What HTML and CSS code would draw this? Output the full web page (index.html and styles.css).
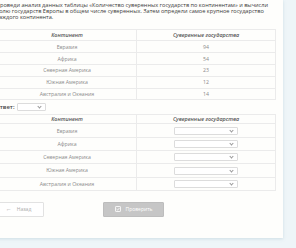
FILE: index.html
```html
<!DOCTYPE html>
<html lang="ru">
<head>
<meta charset="utf-8">
<link rel="stylesheet" href="styles.css">
</head>
<body>
<div class="page">
  <div class="card">
    <p class="task">Проведи анализ данных таблицы «Количество суверенных государств по континентам» и вычисли долю государств Европы в общем числе суверенных. Затем определи самое крупное государство каждого континента.</p>
    <table class="data">
      <thead>
        <tr><th>Континент</th><th>Суверенные государства</th></tr>
      </thead>
      <tbody>
        <tr><td>Евразия</td><td>94</td></tr>
        <tr><td>Африка</td><td>54</td></tr>
        <tr><td>Северная Америка</td><td>23</td></tr>
        <tr><td>Южная Америка</td><td>12</td></tr>
        <tr><td>Австралия и Океания</td><td>14</td></tr>
      </tbody>
    </table>
    <div class="answer">
      <span class="answer-label">Ответ:</span>
      <span class="select small"><span class="chev"></span></span>
    </div>
    <table class="data answers">
      <thead>
        <tr><th>Континент</th><th>Суверенные государства</th></tr>
      </thead>
      <tbody>
        <tr><td>Евразия</td><td><span class="select"><span class="chev"></span></span></td></tr>
        <tr><td>Африка</td><td><span class="select"><span class="chev"></span></span></td></tr>
        <tr><td>Северная Америка</td><td><span class="select"><span class="chev"></span></span></td></tr>
        <tr><td>Южная Америка</td><td><span class="select"><span class="chev"></span></span></td></tr>
        <tr><td>Австралия и Океания</td><td><span class="select"><span class="chev"></span></span></td></tr>
      </tbody>
    </table>
    <div class="actions">
      <button class="btn back"><span class="arrow">&#8592;</span>Назад</button>
      <button class="btn check"><svg class="ico" viewBox="0 0 10 10" width="6" height="6"><rect x="0.8" y="0.8" width="8.4" height="8.4" rx="1" fill="none" stroke="#fff" stroke-width="1.4"/><path d="M2.6 5.2 L4.3 6.8 L7.5 3.3" fill="none" stroke="#fff" stroke-width="1.4"/></svg>Проверить</button>
    </div>
  </div>
</div>
</body>
</html>
```
FILE: styles.css
```css
html, body {
  margin: 0;
  padding: 0;
}
body {
  background: #eef5f8;
  width: 296px;
  height: 248px;
  overflow: hidden;
  font-family: "Open Sans", "Liberation Sans", sans-serif;
}
.page {
  display: flex;
}
.card {
  margin-left: -10px;
  width: 279px;
  height: 235px;
  padding: 3px 7px 0 7px;
  background: #fefefc;
  box-shadow: 0 1px 3px rgba(150, 180, 195, 0.35);
}
.task {
  margin: 0 0 9px -1px;
  font-size: 5.6px;
  line-height: 5.8px;
  color: #3a3a3a;
}
.data {
  width: 279px;
  border-collapse: collapse;
  table-layout: fixed;
  font-size: 5.2px;
}
.data th, .data td {
  border: 1px solid #ebebeb;
  text-align: center;
  padding: 0;
  vertical-align: middle;
}
.data th {
  height: 10px;
  font-weight: 600;
  font-style: italic;
  color: #555;
  font-size: 5.4px;
}
.data td {
  height: 10.8px;
  color: #8a8a8a;
}
.answer {
  display: flex;
  align-items: center;
  gap: 2px;
  height: 14px;
}
.answer-label {
  font-size: 6px;
  font-weight: 600;
  color: #444;
  margin-left: -2px;
}
.select {
  display: inline-block;
  position: relative;
  width: 62px;
  height: 6px;
  border: 1px solid #dcdcdc;
  border-radius: 1px;
  background: #fff;
  vertical-align: middle;
}
.select.small {
  width: 27px;
}
.chev {
  position: absolute;
  right: 4px;
  top: 1px;
  width: 2px;
  height: 2px;
  border-right: 1px solid #999;
  border-bottom: 1px solid #999;
  transform: rotate(45deg);
}
.answers th {
  height: 8px;
}
.answers td {
  height: 12.3px;
}
.actions {
  display: flex;
  align-items: center;
  gap: 59px;
  margin-top: 11px;
  margin-left: -4px;
}
.btn {
  display: flex;
  align-items: center;
  justify-content: center;
  height: 15px;
  padding: 0;
  border-radius: 1px;
  font-family: "Open Sans", "Liberation Sans", sans-serif;
  font-size: 5px;
}
.back {
  width: 51px;
  background: #fff;
  border: 1px solid #e2e2e2;
  color: #aaa;
  gap: 5px;
}
.arrow {
  font-size: 6px;
  color: #999;
}
.check {
  width: 61px;
  background: #c6c6c6;
  border: 1px solid #bdbdbd;
  color: #fff;
  gap: 5px;
}
.ico {
  display: block;
}
```
